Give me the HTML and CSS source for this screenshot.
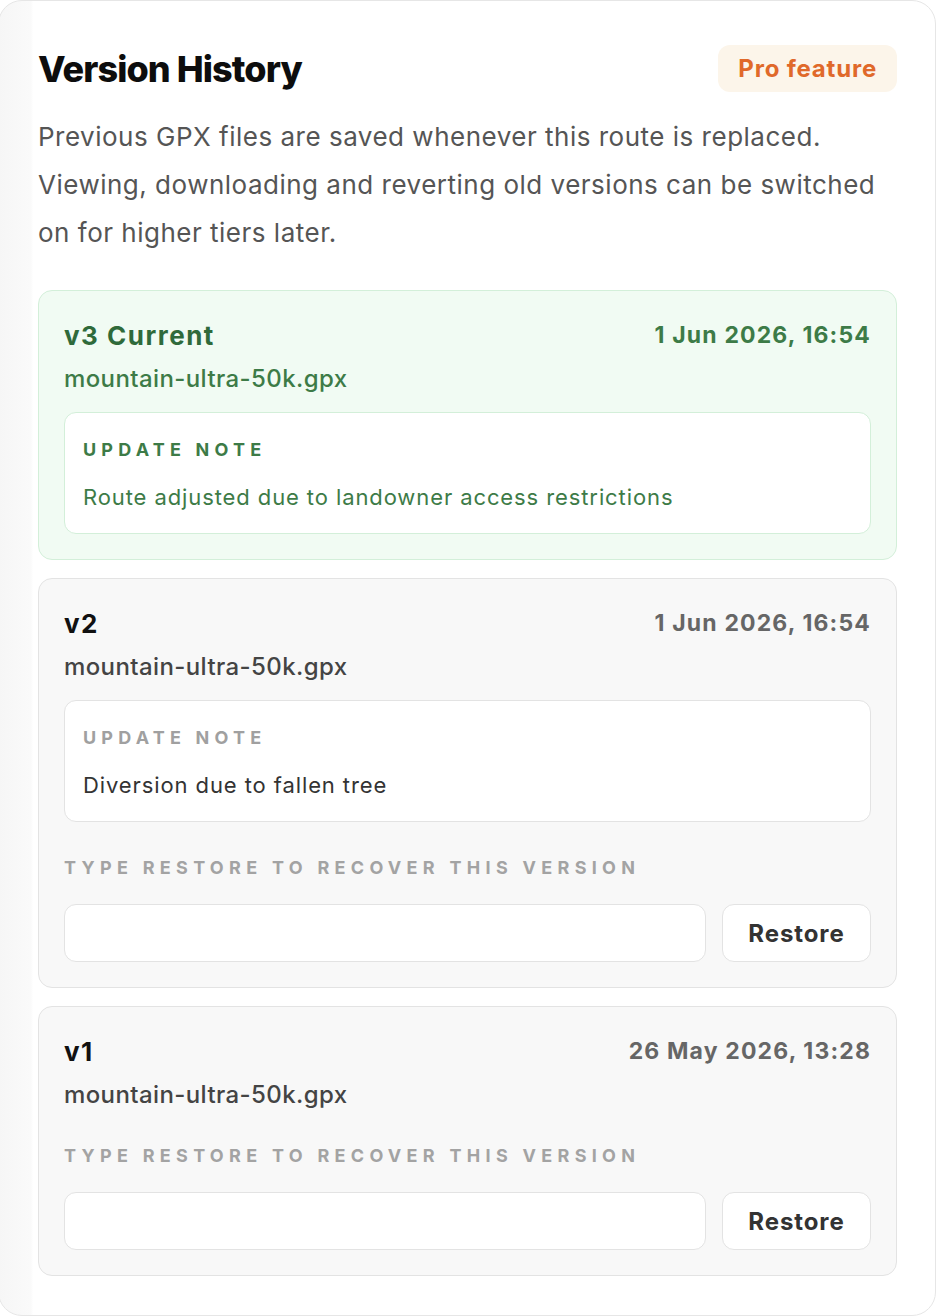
FILE: index.html
```html
<!DOCTYPE html>
<html lang="en">
<head>
  <meta charset="UTF-8">
  <title>Version History</title>
  <link rel="stylesheet" href="styles.css">
</head>
<body>
<div class="panel">
  <div class="panel-head">
    <h1>Version History</h1>
    <span class="badge">Pro feature</span>
  </div>
  <p class="intro">Previous GPX files are saved whenever this route is replaced. Viewing, downloading and reverting old versions can be switched on for higher tiers later.</p>

  <div class="version current">
    <div class="version-top">
      <span class="version-name">v3 Current</span>
      <span class="version-date">1 Jun 2026, 16:54</span>
    </div>
    <div class="version-file">mountain-ultra-50k.gpx</div>
    <div class="note">
      <div class="note-label">Update note</div>
      <div class="note-text">Route adjusted due to landowner access restrictions</div>
    </div>
  </div>

  <div class="version">
    <div class="version-top">
      <span class="version-name">v2</span>
      <span class="version-date">1 Jun 2026, 16:54</span>
    </div>
    <div class="version-file">mountain-ultra-50k.gpx</div>
    <div class="note">
      <div class="note-label">Update note</div>
      <div class="note-text">Diversion due to fallen tree</div>
    </div>
    <div class="restore">
      <label class="restore-label" for="restore-v2">Type RESTORE to recover this version</label>
      <div class="restore-row">
        <input id="restore-v2" type="text">
        <button type="button">Restore</button>
      </div>
    </div>
  </div>

  <div class="version">
    <div class="version-top">
      <span class="version-name">v1</span>
      <span class="version-date">26 May 2026, 13:28</span>
    </div>
    <div class="version-file">mountain-ultra-50k.gpx</div>
    <div class="restore">
      <label class="restore-label" for="restore-v1">Type RESTORE to recover this version</label>
      <div class="restore-row">
        <input id="restore-v1" type="text">
        <button type="button">Restore</button>
      </div>
    </div>
  </div>
</div>
</body>
</html>
```

FILE: styles.css
```css
body { margin: 0; background: #fff; font-family: Inter, "Noto Sans", sans-serif; color: #111; }
.panel { box-sizing: border-box; height: 1316px; margin-left: -2px; padding: 44px 38px 0 39px; border: 1px solid #e6e6e6; border-radius: 24px; background: linear-gradient(to right, #f6f6f6, #fafafa 32px, #fff 34px); }
.panel-head { display: flex; justify-content: space-between; align-items: center; }
h1 { margin: 0; font-size: 36px; font-weight: 800; letter-spacing: -0.9px; color: #0d0d0d; }
.badge { padding: 0 20px; height: 47px; line-height: 47px; border-radius: 12px; background: #fcf5ea; color: #e0692a; font-size: 24px; font-weight: 700; letter-spacing: 0.8px; }
.intro { margin: 21px 0 33px; font-size: 26px; line-height: 48px; letter-spacing: 0.5px; color: #555; }

.version { margin-bottom: 18px; padding: 25px 25px 25px; border: 1px solid #e3e3e3; border-radius: 14px; background: #f8f8f8; }
.version-top { display: flex; justify-content: space-between; align-items: center; height: 38px; }
.version-name { font-size: 26px; font-weight: 700; letter-spacing: 1.5px; color: #111; }
.version-date { font-size: 23px; font-weight: 700; color: #666; letter-spacing: 1.15px; }
.version-file { margin-top: 8px; font-size: 24px; line-height: 34px; font-weight: 500; letter-spacing: 0.4px; color: #444; }

.note { margin-top: 16px; padding: 23px 18px 19px; border: 1px solid #e3e3e3; border-radius: 12px; background: #fff; }
.note-label { font-size: 18px; line-height: 28px; font-weight: 700; letter-spacing: 5.2px; text-transform: uppercase; color: #a0a0a0; }
.note-text { margin-top: 16px; font-size: 22px; line-height: 34px; letter-spacing: 0.9px; color: #333; }

.current { border-color: #d3efd9; background: #f1fbf3; }
.current .version-name { color: #2f6a3a; }
.current .version-date, .current .version-file, .current .note-label, .current .note-text { color: #3d7b47; }
.current .note { border-color: #d3efd9; }

.restore { margin-top: 30px; }
.note + .restore { margin-top: 32px; }
.restore-label { display: block; font-size: 18px; line-height: 28px; font-weight: 700; letter-spacing: 5.3px; text-transform: uppercase; color: #a3a3a3; }
.restore-row { display: flex; gap: 16px; margin-top: 22px; }
.restore-row input { flex: 1; box-sizing: border-box; height: 58px; border: 1px solid #e3e3e3; border-radius: 12px; background: #fff; font: inherit; }
.restore-row button { box-sizing: border-box; width: 149px; height: 58px; border: 1px solid #e3e3e3; border-radius: 12px; background: #fff; font-family: inherit; font-size: 24px; font-weight: 700; color: #333; letter-spacing: 0.9px; }
```
